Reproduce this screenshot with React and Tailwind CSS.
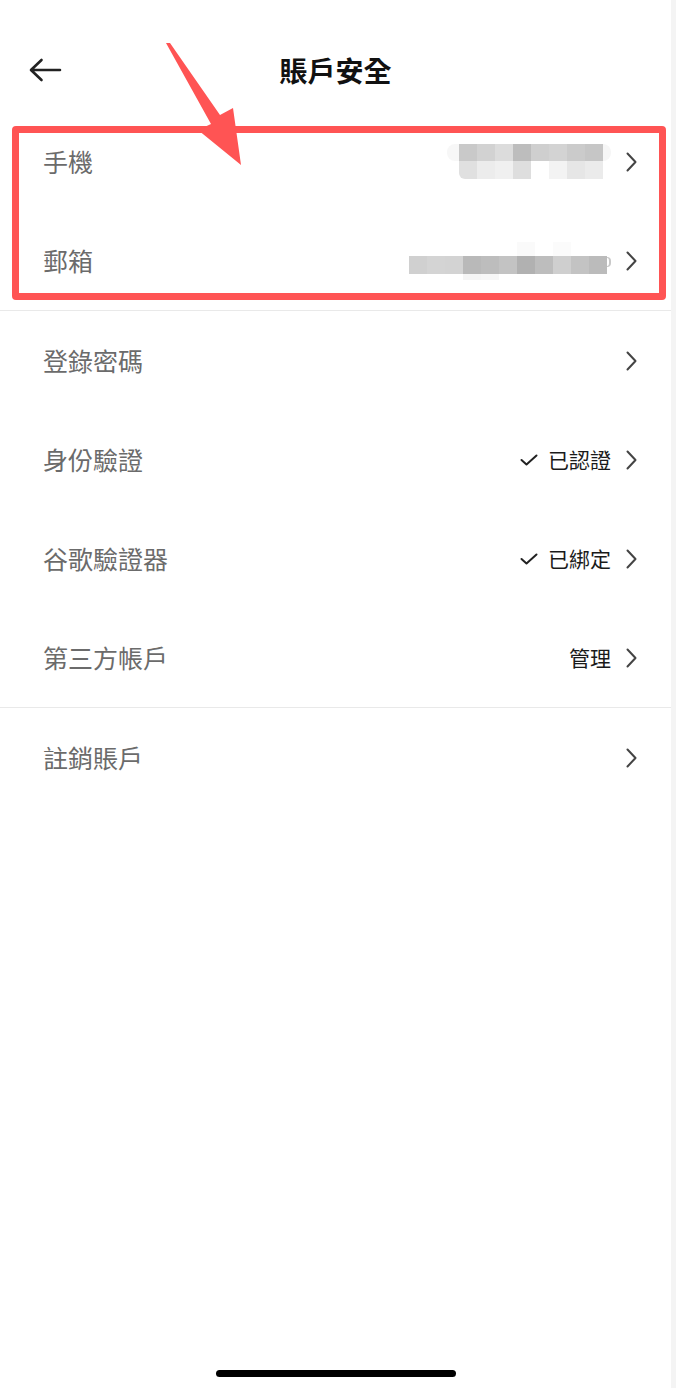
import React from "react";

const font = { fontFamily: '"Noto Sans CJK TC", "Noto Sans", sans-serif' };

function Chevron() {
  return (
    <svg width="11" height="20" viewBox="0 0 11 20" className="shrink-0">
      <path d="M1.5 1.5 L9.5 10 L1.5 18.5" fill="none" stroke="#444" strokeWidth="2" strokeLinecap="round" strokeLinejoin="round" />
    </svg>
  );
}

function Check() {
  return (
    <svg width="18" height="12" viewBox="0 0 18 12" className="shrink-0">
      <path d="M1.5 6 L6.5 10.5 L16.5 1.5" fill="none" stroke="#222" strokeWidth="2" strokeLinecap="round" strokeLinejoin="round" />
    </svg>
  );
}

const phoneTop = ["bg-[#c9c9c9]", "bg-[#d2d2d2]", "bg-[#dcdcdc]", "bg-[#bdbdbd]", "bg-[#cfcfcf]", "bg-[#d3d3d3]", "bg-[#cbcbcb]", "bg-[#c6c6c6]"];
const phoneBot = ["bg-[#e0e0e0]", "bg-[#ececec]", "bg-[#f0f0f0]", "bg-[#dedede]", "bg-white", "bg-[#f3f3f3]", "bg-[#e6e6e6]", "bg-[#ebebeb]"];
const mailMain = ["bg-[#d0d0d0]", "bg-[#d4d4d4]", "bg-[#d3d3d3]", "bg-[#b9b9b9]", "bg-[#bdbdbd]", "bg-[#c3c3c3]", "bg-[#b1b1b1]", "bg-[#bdbdbd]", "bg-[#cfcfcf]", "bg-[#c3c3c3]", "bg-[#bbbbbb]"];
const mailTop = ["bg-white", "bg-white", "bg-white", "bg-white", "bg-white", "bg-white", "bg-[#fafafa]", "bg-white", "bg-[#fbfbfb]", "bg-white", "bg-white"];
const mailBot = ["bg-white", "bg-white", "bg-white", "bg-[#f5f5f5]", "bg-[#f7f7f7]", "bg-white", "bg-white", "bg-white", "bg-white", "bg-white", "bg-white"];

function PhoneBlur() {
  return (
    <div className="flex flex-col">
      <div className="flex">
        <div className="w-[12px] h-[17px] bg-[#f7f7f7] rounded-l-[8px]" />
        {phoneTop.map((c, i) => (
          <div key={i} className={`w-[18px] h-[17px] ${c}`} />
        ))}
        <div className="w-[8px] h-[17px] bg-[#f6f6f6] rounded-r-[8px]" />
      </div>
      <div className="flex">
        <div className="w-[12px] h-[18px]" />
        {phoneBot.map((c, i) => (
          <div key={i} className={`w-[18px] h-[18px] ${c} ${i === 0 ? "rounded-bl-[6px]" : ""}`} />
        ))}
        <div className="w-[8px] h-[18px]" />
      </div>
    </div>
  );
}

function MailBlur() {
  return (
    <div className="flex items-center">
      <div className="flex flex-col">
        <div className="flex">
          {mailTop.map((c, i) => (
            <div key={i} className={`w-[18px] h-[14px] ${c}`} />
          ))}
        </div>
        <div className="flex">
          {mailMain.map((c, i) => (
            <div key={i} className={`w-[18px] h-[18px] ${c}`} />
          ))}
        </div>
        <div className="flex">
          {mailBot.map((c, i) => (
            <div key={i} className={`w-[18px] h-[6px] ${c}`} />
          ))}
        </div>
      </div>
      <div className="w-[4px] h-[10px] mt-[2px] rounded-r-full border-r-2 border-t border-b border-[#c8c8c8]" />
    </div>
  );
}

function Row({ label, children }) {
  return (
    <div className="h-[99px] flex items-center pl-[43px] pr-[34px]">
      <span className="text-[25px] text-[#6b6b6b] leading-none flex-1">{label}</span>
      <div className="flex items-center">
        {children}
        <div className="ml-[15px] flex items-center">
          <Chevron />
        </div>
      </div>
    </div>
  );
}

function Status({ text, check }) {
  return (
    <div className="flex items-center">
      {check && (
        <div className="mr-[10px] flex items-center">
          <Check />
        </div>
      )}
      <span className="text-[21px] text-[#1a1a1a] leading-none">{text}</span>
    </div>
  );
}

export default function App() {
  return (
    <div className="w-[676px] h-[1388px] flex bg-white overflow-hidden" style={font}>
      <div className="flex-1 relative flex flex-col">
        <div className="h-[112px] pt-[45px]">
          <div className="relative h-[50px] flex items-center justify-center">
            <div className="absolute left-[29px] top-[13px]">
              <svg width="33" height="24" viewBox="0 0 33 24">
                <path d="M31 12 H3 M12.5 2 L2 12 L12.5 22" fill="none" stroke="#222" strokeWidth="2.6" strokeLinecap="round" strokeLinejoin="round" />
              </svg>
            </div>
            <span className="text-[28px] font-bold text-[#111] leading-none">賬戶安全</span>
          </div>
        </div>

        <Row label="手機">
          <PhoneBlur />
        </Row>
        <Row label="郵箱">
          <MailBlur />
        </Row>
        <div className="h-[1px] bg-[#e9e9e9]" />
        <Row label="登錄密碼" />
        <Row label="身份驗證">
          <Status text="已認證" check />
        </Row>
        <Row label="谷歌驗證器">
          <Status text="已綁定" check />
        </Row>
        <Row label="第三方帳戶">
          <Status text="管理" />
        </Row>
        <div className="h-[1px] bg-[#e9e9e9]" />
        <Row label="註銷賬戶" />

        <div className="flex-1" />
        <div className="flex justify-center pb-[11px]">
          <div className="w-[240px] h-[7px] rounded-full bg-black" />
        </div>

        {/* annotation overlay */}
        <div className="absolute left-[12px] top-[126px] w-[654px] h-[174px] border-[7px] border-[#ff5454] rounded-[4px]" />
        <svg className="absolute left-0 top-0" width="300" height="200" viewBox="0 0 300 200">
          <polygon points="166,43 170,43 220,115 233,108 241,165 198,130 211,124" fill="#ff5454" />
        </svg>
      </div>
      <div className="w-[5px] bg-[#f4f4f4]" />
    </div>
  );
}
